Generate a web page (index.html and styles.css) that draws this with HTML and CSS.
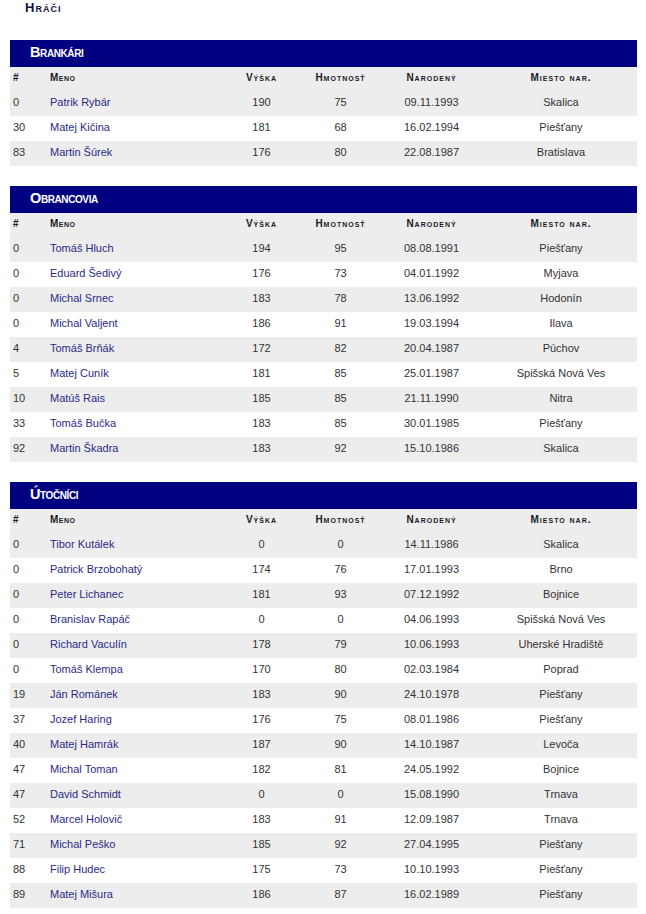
FILE: index.html
```html
<!DOCTYPE html>
<html lang="sk">
<head>
<meta charset="utf-8">
<title>Hráči</title>
<link rel="stylesheet" href="styles.css">
</head>
<body>
<h1 class="page-title">Hráči</h1>

<section class="squad">
  <h2 class="squad-title">Brankári</h2>
  <table class="roster">
    <colgroup><col class="c-num"><col class="c-name"><col class="c-h"><col class="c-w"><col class="c-d"><col class="c-p"></colgroup>
    <thead><tr><th class="l">#</th><th class="l">Meno</th><th>Výška</th><th>Hmotnosť</th><th>Narodený</th><th>Miesto nar.</th></tr></thead>
    <tbody>
      <tr><td class="l">0</td><td class="l"><a href="#">Patrik Rybár</a></td><td>190</td><td>75</td><td>09.11.1993</td><td>Skalica</td></tr>
      <tr><td class="l">30</td><td class="l"><a href="#">Matej Kičina</a></td><td>181</td><td>68</td><td>16.02.1994</td><td>Piešťany</td></tr>
      <tr><td class="l">83</td><td class="l"><a href="#">Martin Šúrek</a></td><td>176</td><td>80</td><td>22.08.1987</td><td>Bratislava</td></tr>
    </tbody>
  </table>
</section>

<section class="squad">
  <h2 class="squad-title">Obrancovia</h2>
  <table class="roster">
    <colgroup><col class="c-num"><col class="c-name"><col class="c-h"><col class="c-w"><col class="c-d"><col class="c-p"></colgroup>
    <thead><tr><th class="l">#</th><th class="l">Meno</th><th>Výška</th><th>Hmotnosť</th><th>Narodený</th><th>Miesto nar.</th></tr></thead>
    <tbody>
      <tr><td class="l">0</td><td class="l"><a href="#">Tomáš Hluch</a></td><td>194</td><td>95</td><td>08.08.1991</td><td>Piešťany</td></tr>
      <tr><td class="l">0</td><td class="l"><a href="#">Eduard Šedivý</a></td><td>176</td><td>73</td><td>04.01.1992</td><td>Myjava</td></tr>
      <tr><td class="l">0</td><td class="l"><a href="#">Michal Srnec</a></td><td>183</td><td>78</td><td>13.06.1992</td><td>Hodonín</td></tr>
      <tr><td class="l">0</td><td class="l"><a href="#">Michal Valjent</a></td><td>186</td><td>91</td><td>19.03.1994</td><td>Ilava</td></tr>
      <tr><td class="l">4</td><td class="l"><a href="#">Tomáš Brňák</a></td><td>172</td><td>82</td><td>20.04.1987</td><td>Púchov</td></tr>
      <tr><td class="l">5</td><td class="l"><a href="#">Matej Cuník</a></td><td>181</td><td>85</td><td>25.01.1987</td><td>Spišská Nová Ves</td></tr>
      <tr><td class="l">10</td><td class="l"><a href="#">Matúš Rais</a></td><td>185</td><td>85</td><td>21.11.1990</td><td>Nitra</td></tr>
      <tr><td class="l">33</td><td class="l"><a href="#">Tomáš Bučka</a></td><td>183</td><td>85</td><td>30.01.1985</td><td>Piešťany</td></tr>
      <tr><td class="l">92</td><td class="l"><a href="#">Martin Škadra</a></td><td>183</td><td>92</td><td>15.10.1986</td><td>Skalica</td></tr>
    </tbody>
  </table>
</section>

<section class="squad">
  <h2 class="squad-title">Útočníci</h2>
  <table class="roster">
    <colgroup><col class="c-num"><col class="c-name"><col class="c-h"><col class="c-w"><col class="c-d"><col class="c-p"></colgroup>
    <thead><tr><th class="l">#</th><th class="l">Meno</th><th>Výška</th><th>Hmotnosť</th><th>Narodený</th><th>Miesto nar.</th></tr></thead>
    <tbody>
      <tr><td class="l">0</td><td class="l"><a href="#">Tibor Kutálek</a></td><td>0</td><td>0</td><td>14.11.1986</td><td>Skalica</td></tr>
      <tr><td class="l">0</td><td class="l"><a href="#">Patrick Brzobohatý</a></td><td>174</td><td>76</td><td>17.01.1993</td><td>Brno</td></tr>
      <tr><td class="l">0</td><td class="l"><a href="#">Peter Lichanec</a></td><td>181</td><td>93</td><td>07.12.1992</td><td>Bojnice</td></tr>
      <tr><td class="l">0</td><td class="l"><a href="#">Branislav Rapáč</a></td><td>0</td><td>0</td><td>04.06.1993</td><td>Spišská Nová Ves</td></tr>
      <tr><td class="l">0</td><td class="l"><a href="#">Richard Vaculín</a></td><td>178</td><td>79</td><td>10.06.1993</td><td>Uherské Hradiště</td></tr>
      <tr><td class="l">0</td><td class="l"><a href="#">Tomáš Klempa</a></td><td>170</td><td>80</td><td>02.03.1984</td><td>Poprad</td></tr>
      <tr><td class="l">19</td><td class="l"><a href="#">Ján Románek</a></td><td>183</td><td>90</td><td>24.10.1978</td><td>Piešťany</td></tr>
      <tr><td class="l">37</td><td class="l"><a href="#">Jozef Haring</a></td><td>176</td><td>75</td><td>08.01.1986</td><td>Piešťany</td></tr>
      <tr><td class="l">40</td><td class="l"><a href="#">Matej Hamrák</a></td><td>187</td><td>90</td><td>14.10.1987</td><td>Levoča</td></tr>
      <tr><td class="l">47</td><td class="l"><a href="#">Michal Toman</a></td><td>182</td><td>81</td><td>24.05.1992</td><td>Bojnice</td></tr>
      <tr><td class="l">47</td><td class="l"><a href="#">David Schmidt</a></td><td>0</td><td>0</td><td>15.08.1990</td><td>Trnava</td></tr>
      <tr><td class="l">52</td><td class="l"><a href="#">Marcel Holovič</a></td><td>183</td><td>91</td><td>12.09.1987</td><td>Trnava</td></tr>
      <tr><td class="l">71</td><td class="l"><a href="#">Michal Peško</a></td><td>185</td><td>92</td><td>27.04.1995</td><td>Piešťany</td></tr>
      <tr><td class="l">88</td><td class="l"><a href="#">Filip Hudec</a></td><td>175</td><td>73</td><td>10.10.1993</td><td>Piešťany</td></tr>
      <tr><td class="l">89</td><td class="l"><a href="#">Matej Mišura</a></td><td>186</td><td>87</td><td>16.02.1989</td><td>Piešťany</td></tr>
    </tbody>
  </table>
</section>
</body>
</html>
```
FILE: styles.css
```css
html, body {
  margin: 0;
  padding: 0;
  background: #ffffff;
}
body {
  font-family: "Liberation Sans", Arial, sans-serif;
  color: #333333;
  padding-bottom: 6px;
}
.page-title {
  margin: 0 0 24px 0;
  padding-left: 25px;
  font-size: 13px;
  line-height: 16px;
  font-weight: bold;
  font-variant: small-caps;
  letter-spacing: 1px;
  color: #14143c;
}
.squad {
  margin: 0 9px 20px 10px;
}
.squad:last-child {
  margin-bottom: 0;
}
.squad-title {
  margin: 0;
  height: 27px;
  box-sizing: border-box;
  padding: 0 0 2px 20px;
  line-height: 25px;
  background: #000080;
  color: #ffffff;
  font-size: 14.5px;
  font-weight: bold;
  font-variant: small-caps;
  letter-spacing: -0.4px;
}
.roster {
  width: 627px;
  border-collapse: collapse;
  table-layout: fixed;
}
.c-num { width: 37px; }
.c-name { width: 173px; }
.c-h { width: 80px; }
.c-w { width: 78px; }
.c-d { width: 104px; }
.c-p { width: 155px; }
.roster th,
.roster td {
  padding: 0 0 0 3px;
  text-align: center;
  white-space: nowrap;
  vertical-align: top;
}
.roster th {
  height: 24px;
  line-height: 22px;
  font-size: 10px;
  font-weight: bold;
  font-variant: small-caps;
  letter-spacing: 1px;
  color: #1a1a2a;
}
.roster th.l {
  letter-spacing: 0.5px;
}
.roster td {
  height: 25px;
  line-height: 22px;
  font-size: 11px;
  color: #333333;
}
.roster .l {
  text-align: left;
}
.roster thead tr {
  background: #ededed;
}
.roster tbody tr:nth-child(odd) {
  background: #ededed;
}
.roster tbody tr:nth-child(even) {
  background: #ffffff;
}
.roster a {
  color: #2b2b88;
  text-decoration: none;
}
```
